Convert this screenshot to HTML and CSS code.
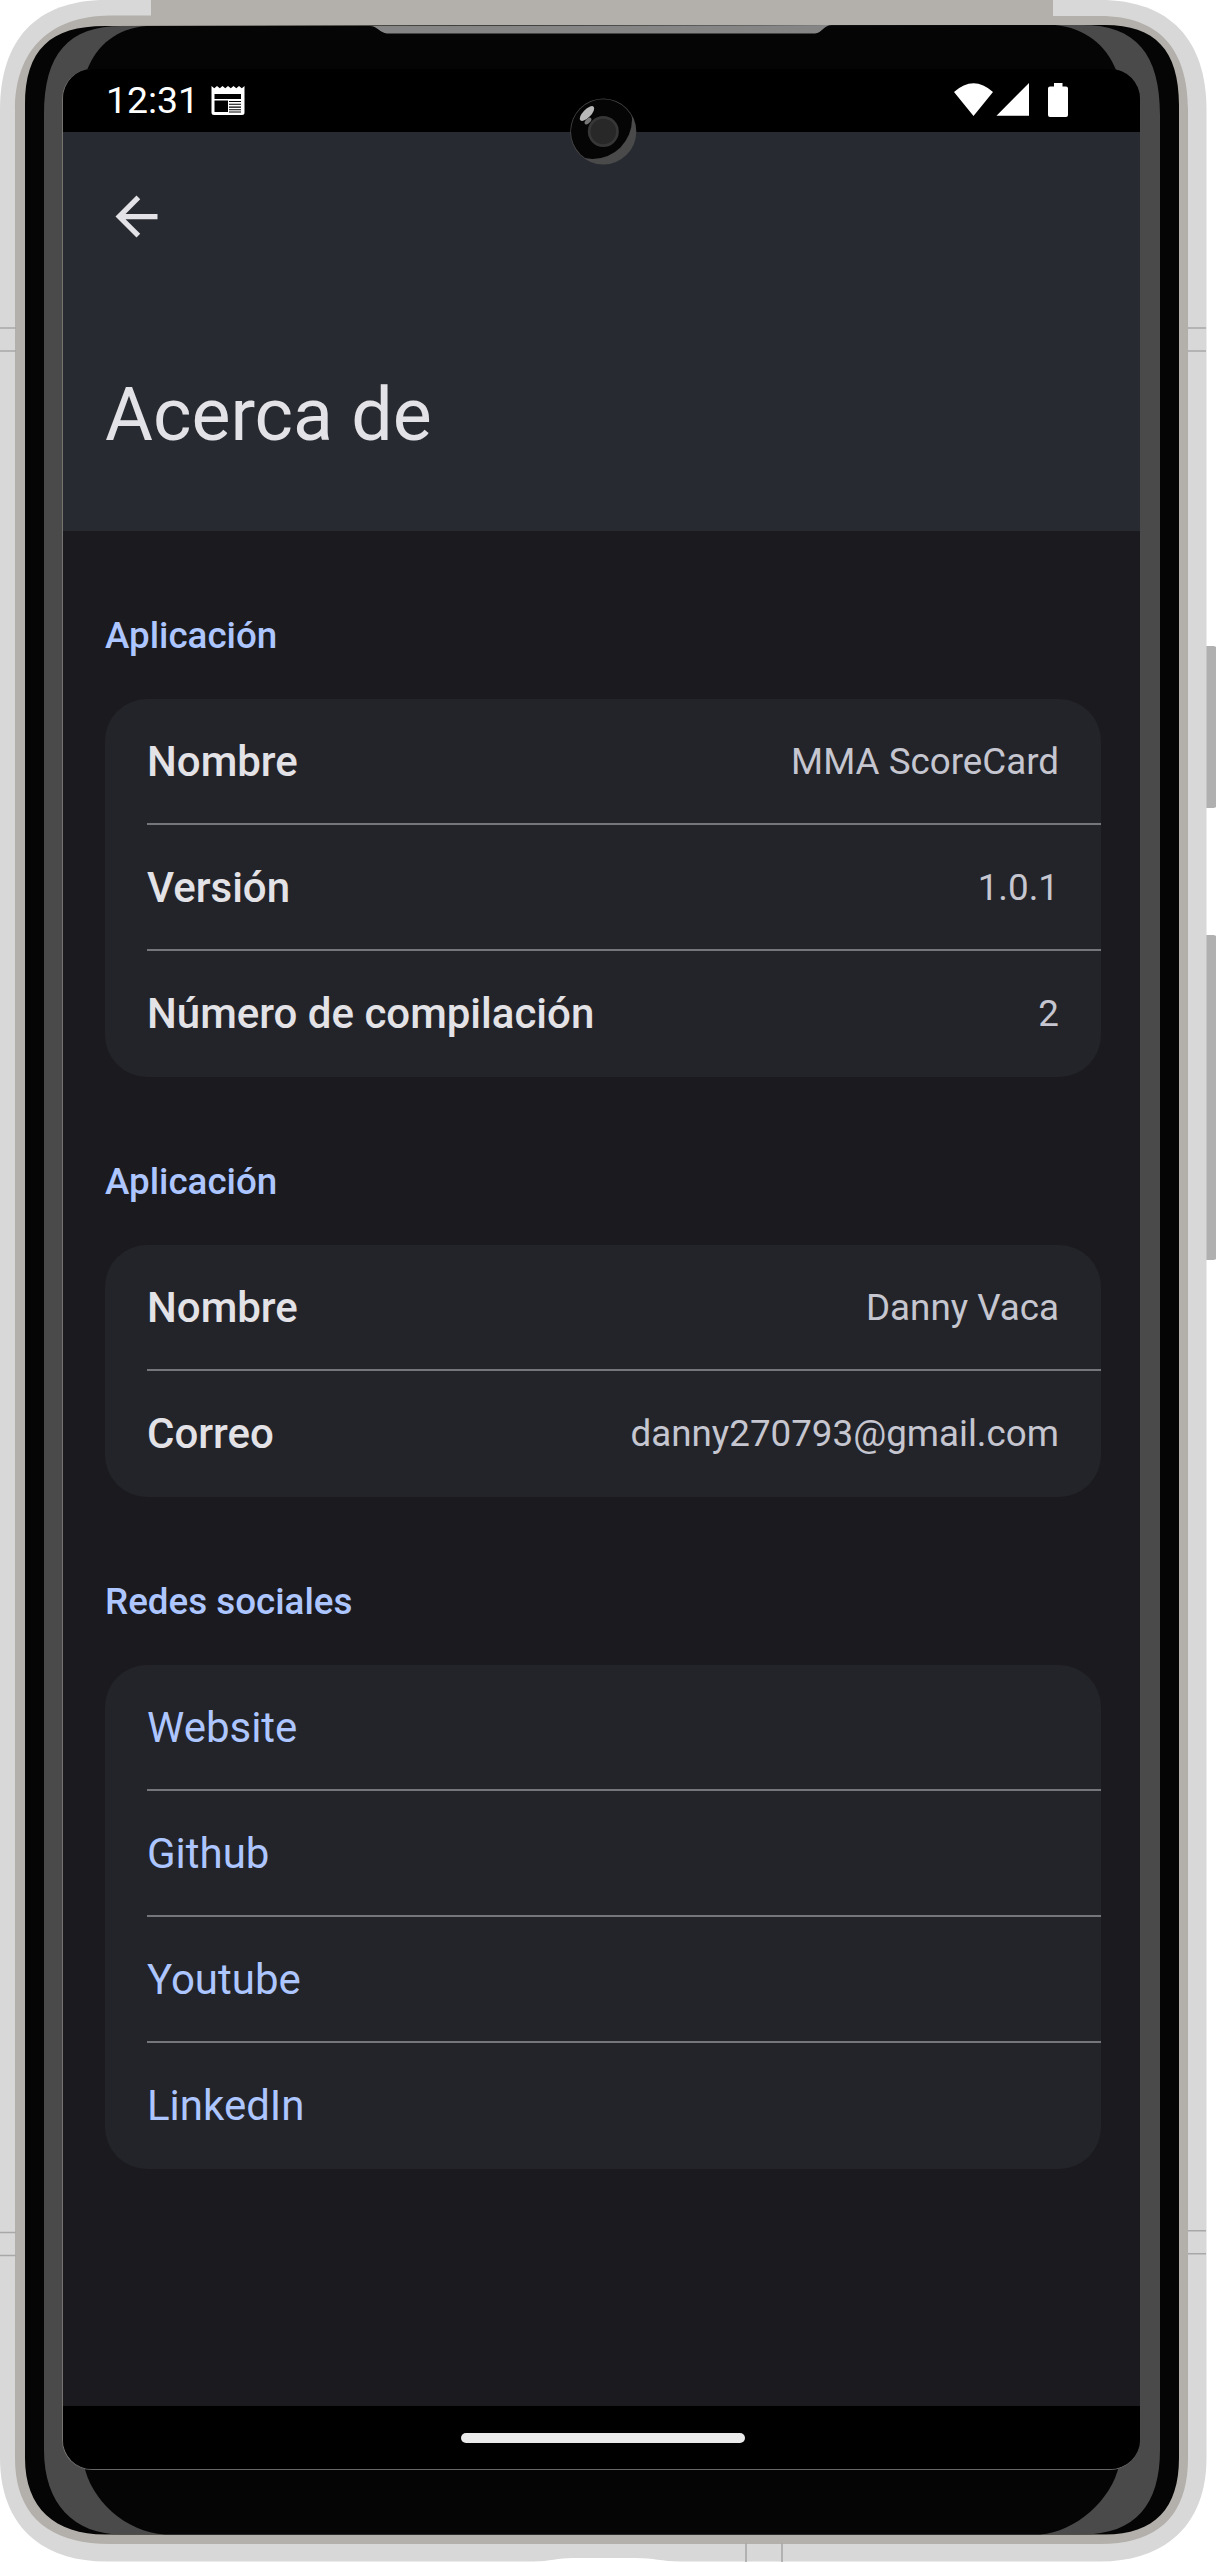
FILE: index.html
```html
<!DOCTYPE html>
<html lang="es">
<head>
<meta charset="utf-8">
<title>Acerca de</title>
<link rel="stylesheet" href="styles.css">
</head>
<body>
<div class="phone">
  <svg class="frame" viewBox="0 0 1216 2562" aria-hidden="true">
    <!-- side buttons -->
    <rect x="1200" y="646" width="17" height="162" rx="4" fill="#b0b0b0"/>
    <rect x="1200" y="935" width="17" height="325" rx="4" fill="#b0b0b0"/>
    <!-- outer shell -->
    <path fill="#d8d8d8" d="M0 110C0 40 36 0 106 0H1100C1170 0 1206.500 40 1206.500 110V2458C1206.500 2524 1166 2561.500 1100 2561.500H106C40 2561.500 0 2524 0 2458Z"/>
    <path fill="#fff" d="M533 2562C550 2561 558 2558 573 2558H636C653 2558 662 2561 680 2562Z"/>
    <path fill="#b3afaa" d="M151 0H1053V16H1100C1160 16 1188 50 1188 110V2458C1188 2512 1162 2544 1100 2544H110C45 2544 15 2512 15 2458V110C15 50 50 16 110 15.500H151Z"/>
    <path stroke="#a8a8a8" stroke-width="1.600" d="M0 328H16M0 351H16M1188 328H1206M1188 351H1206M0 2232.500H16M0 2255.500H16M1188 2230.800H1206M1188 2253.800H1206M746 2543V2562M782 2543V2562"/>
    <!-- bezel layers -->
    <path fill="#050505" d="M25 105C25 50 50 26 105 26L1105 25C1155 25 1179 50 1179 105V2458C1179 2508 1155 2534.500 1105 2534.500H105C55 2534.500 25 2508 25 2458Z"/>
    <path fill="#4a4a4a" d="M44 115C44 54 68 26 122 26L1082 25C1136 25 1160 54 1160 115V2450C1160 2504 1136 2534.500 1082 2534.500H122C74 2534.500 44 2504 44 2450Z"/>
    <path fill="#050505" d="M87 70C97 45 117 28 147 26L1055 25C1085 28 1106 45 1116 70L1119 2465C1112 2500 1075 2532 1040 2534.500H165C125 2532 91 2500 84 2465Z"/>
    <path fill="#858585" d="M370 26C377 26 380 33 387 33.500H815C822 33 824 25 832 25Z"/>
    <path fill="#4a4a4a" d="M62 95H100V2440H62ZM1100 95H1141V2440H1100Z"/>
  </svg>

  <main class="screen">
    <div class="status">
      <span class="time">12:31</span>
      <svg class="news" viewBox="0 0 34 29" aria-hidden="true">
        <path fill="#fff" fill-rule="evenodd" d="M.5 0L3.300 2.300 6 0 8.800 2.300 11.500 0 14.300 2.300 17 0 19.800 2.300 22.500 0 25.300 2.300 28 0 30.800 2.300 33.500 0V26.500Q33.500 29 31 29H3Q.5 29 .5 26.500ZM3.500 8V13H30V8ZM3.500 14.500V26H17V14.500Z"/>
        <path stroke="#000" stroke-width="1.100" d="M18 15.500H30M18 18.300H30M18 21.100H30M18 23.700H30M18 26H30"/>
      </svg>
      <svg class="signals" viewBox="954 83 116 34" aria-hidden="true">
        <path fill="#fff" d="M954 92Q973.500 74.500 993 92L973.500 116ZM996.500 115.700H1029V83ZM1054 83H1062.500V86.500H1066Q1068 86.500 1068 88.500V115Q1068 117 1066 117H1050Q1048 117 1048 115V88.500Q1048 86.500 1050 86.500H1054Z"/>
      </svg>
    </div>

    <header class="appbar">
      <svg class="back" viewBox="0 0 24 24" aria-hidden="true"><path fill="#e3e2e6" d="M20 11H7.830l5.590-5.590L12 4l-8 8 8 8 1.410-1.410L7.830 13H20v-2z"/></svg>
      <h1 class="title">Acerca de</h1>
    </header>

    <div class="content">
      <section class="group">
        <h2 class="heading">Aplicación</h2>
        <div class="card">
          <div class="row"><span class="label">Nombre</span><span class="value">MMA ScoreCard</span></div>
          <div class="row"><span class="label">Versión</span><span class="value">1.0.1</span></div>
          <div class="row"><span class="label">Número de compilación</span><span class="value">2</span></div>
        </div>
      </section>
      <section class="group">
        <h2 class="heading">Aplicación</h2>
        <div class="card">
          <div class="row"><span class="label">Nombre</span><span class="value">Danny Vaca</span></div>
          <div class="row"><span class="label">Correo</span><span class="value">danny270793@gmail.com</span></div>
        </div>
      </section>
      <section class="group">
        <h2 class="heading">Redes sociales</h2>
        <div class="card">
          <div class="row"><a class="link">Website</a></div>
          <div class="row"><a class="link">Github</a></div>
          <div class="row"><a class="link">Youtube</a></div>
          <div class="row"><a class="link">LinkedIn</a></div>
        </div>
      </section>
    </div>

    <div class="nav"><div class="pill"></div></div>
  </main>

  <svg class="camera" viewBox="570 98 67 67" aria-hidden="true">
    <clipPath id="lens"><circle cx="603.300" cy="131.500" r="32.300"/></clipPath>
    <circle cx="603.300" cy="131.500" r="33" fill="#4a4a4a"/>
    <circle cx="592.500" cy="119.500" r="39.500" fill="#050505" clip-path="url(#lens)"/>
    <circle cx="603.300" cy="131.500" r="15.500" fill="#373737"/>
    <circle cx="603.300" cy="131.500" r="12.800" fill="#282828"/>
    <ellipse cx="587" cy="113.500" rx="9.500" ry="4" transform="rotate(-46 587 113.500)" fill="#b8b8b8"/>
    <ellipse cx="588" cy="121" rx="4.200" ry="2.300" transform="rotate(-46 588 121)" fill="#777"/>
  </svg>
</div>
</body>
</html>
```
FILE: styles.css
```css
* {
  box-sizing: border-box;
}

body {
  margin: 0;
  background: #fff;
  font-family: Roboto, sans-serif;
}

.phone {
  position: relative;
  width: 1216px;
  height: 2562px;
  padding: 69px 76px 92px 62px;
  overflow: hidden;
}

.frame {
  position: absolute;
  inset: 0;
  width: 1216px;
  height: 2562px;
}

.screen {
  position: relative;
  display: flex;
  flex-direction: column;
  height: 2401px;
  border-left: 1px solid #77736f;
  border-bottom: 1px solid #666;
  border-radius: 30px;
  background: #1b1b1f;
  overflow: hidden;
}

.status {
  display: flex;
  align-items: center;
  flex: none;
  height: 63px;
  padding: 0 70px 0 43px;
  background: #000;
  color: #fff;
}

.time {
  width: 92px;
  font-size: 37.4px;
  line-height: 43px;
  white-space: nowrap;
}

.news {
  width: 34px;
  height: 29px;
  margin-left: 13px;
}

.signals {
  width: 116px;
  height: 34px;
  margin-bottom: 1px;
  margin-left: auto;
}

.appbar {
  flex: none;
  height: 399px;
  padding: 52.5px 42px 0;
  background: #272a31;
}

.back {
  display: block;
  width: 63px;
  height: 63px;
}

.title {
  margin: 120px 0 0;
  color: #e3e2e6;
  font-size: 73.5px;
  font-weight: 400;
  line-height: 94px;
}

.content {
  flex: 1;
  padding: 0 39px 0 42px;
}

.heading {
  margin: 0;
  padding: 78px 0 37px;
  color: #adc6ff;
  font-size: 36.75px;
  font-weight: 500;
  line-height: 53px;
}

.card {
  border-radius: 42px;
  background: #232429;
  overflow: hidden;
}

.row {
  display: flex;
  align-items: center;
  justify-content: space-between;
  height: 126px;
  margin-left: 42px;
  padding-right: 42px;
  border-bottom: 2px solid #75767b;
}

.row:last-child {
  border-bottom-color: transparent;
}

.label {
  color: #e3e2e6;
  font-size: 42px;
  font-weight: 500;
}

.value {
  color: #c5c6d0;
  font-size: 36.75px;
}

.link {
  color: #adc6ff;
  font-size: 42px;
}

.nav {
  display: flex;
  align-items: center;
  justify-content: center;
  flex: none;
  height: 63px;
  padding-left: 2px;
  background: #000;
}

.pill {
  width: 284px;
  height: 10px;
  border-radius: 5px;
  background: #ebebeb;
}

.camera {
  position: absolute;
  left: 570px;
  top: 98px;
  width: 67px;
  height: 67px;
}
```
